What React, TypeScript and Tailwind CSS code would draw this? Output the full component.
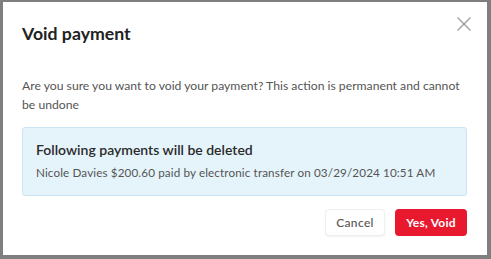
import { X } from "lucide-react";

export default function App() {
  return (
    <div className="w-[491px] h-[259px] bg-[#7f7f7f] pt-[2px] pl-[3px] pr-[4px] pb-[4px] font-['Lato',sans-serif]">
      <div className="relative h-full bg-white pl-[19px] pr-[20px] pt-[20px]">
        {/* Header */}
        <div className="flex items-start justify-between">
          <h2 className="text-[17.7px] leading-[24px] font-bold text-[#222]">Void payment</h2>
          <button className="absolute right-[11px] top-[10px] text-[#9a9a9a]">
            <X className="w-[24px] h-[24px]" strokeWidth={1.3} />
          </button>
        </div>

        {/* Body */}
        <p className="mt-[30px] text-[12.2px] leading-[19px] text-[#555]">
          Are you sure you want to void your payment? This action is permanent and cannot be undone
        </p>

        <div className="mt-[13px] bg-[#e5f4fb] border border-[#c9e6f3] rounded-[3px] px-[13px] pt-[12px] pb-[14px]">
          <p className="text-[14px] leading-[20px] font-semibold text-[#2a2a2a]">Following payments will be deleted</p>
          <p className="mt-[3px] text-[11.7px] leading-[18px] tracking-[0.01em] text-[#555]">
            Nicole Davies $200.60 paid by electronic transfer on 03/29/2024 10:51 AM
          </p>
        </div>

        {/* Footer */}
        <div className="flex justify-end gap-[10px] mt-[13px]">
          <button className="h-[27px] w-[60px] text-[12px] font-medium tracking-[0.03em] text-[#555] bg-white border border-[#eeeeee] rounded-[4px] shadow-[0_1px_2px_rgba(0,0,0,0.06)]">
            Cancel
          </button>
          <button className="h-[27px] w-[72px] text-[12px] font-bold tracking-[0.02em] text-white bg-[#e8192f] rounded-[4px]">
            Yes, Void
          </button>
        </div>
      </div>
    </div>
  );
}
